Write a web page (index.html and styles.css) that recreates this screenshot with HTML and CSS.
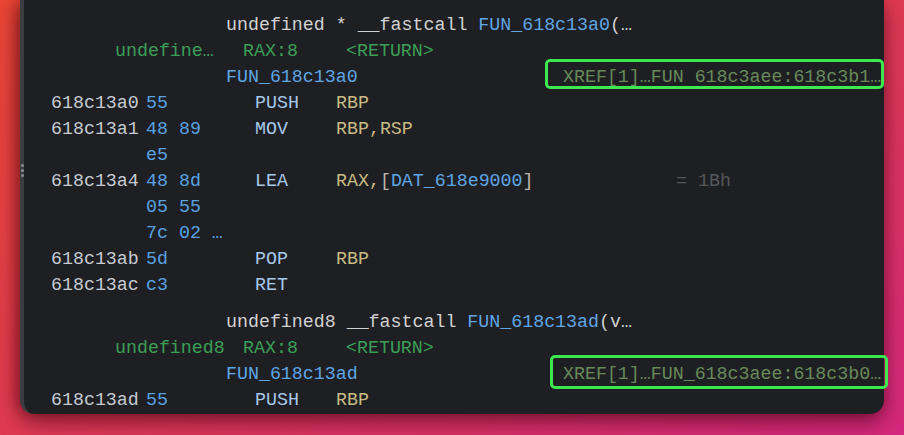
FILE: index.html
```html
<!DOCTYPE html>
<html>
<head>
<meta charset="utf-8">
<link rel="stylesheet" href="styles.css">
</head>
<body>
<div class="panel">
  <div class="fn">
    <div class="row head"><span class="txt">undefined * __fastcall </span><span class="blue">FUN_618c13a0</span><span class="txt">(…</span></div>
    <div class="row sig"><span class="g1">undefine…</span><span class="g2">RAX:8</span><span class="g3">&lt;RETURN&gt;</span></div>
    <div class="row lbl"><span class="label">FUN_618c13a0</span><span class="xref">XREF[1]…FUN 618c3aee:618c3b1…</span></div>
    <div class="row ins"><span class="addr">618c13a0</span><span class="bytes">55</span><span class="mn">PUSH</span><span class="op">RBP</span></div>
    <div class="row ins"><span class="addr">618c13a1</span><span class="bytes">48 89</span><span class="mn">MOV</span><span class="op">RBP,RSP</span></div>
    <div class="row ins"><span class="addr"></span><span class="bytes">e5</span></div>
    <div class="row ins"><span class="addr">618c13a4</span><span class="bytes">48 8d</span><span class="mn">LEA</span><span class="op opw">RAX,<span class="br">[</span><span class="blue">DAT_618e9000</span><span class="br">]</span></span><span class="cmt">= 1Bh</span></div>
    <div class="row ins"><span class="addr"></span><span class="bytes">05 55</span></div>
    <div class="row ins"><span class="addr"></span><span class="bytes">7c 02 …</span></div>
    <div class="row ins"><span class="addr">618c13ab</span><span class="bytes">5d</span><span class="mn">POP</span><span class="op">RBP</span></div>
    <div class="row ins"><span class="addr">618c13ac</span><span class="bytes">c3</span><span class="mn">RET</span></div>
  </div>
  <div class="fn second">
    <div class="row head"><span class="txt">undefined8 __fastcall </span><span class="blue">FUN_618c13ad</span><span class="txt">(v…</span></div>
    <div class="row sig"><span class="g1">undefined8</span><span class="g2">RAX:8</span><span class="g3">&lt;RETURN&gt;</span></div>
    <div class="row lbl"><span class="label">FUN_618c13ad</span><span class="xref">XREF[1]…FUN_618c3aee:618c3b0…</span></div>
    <div class="row ins"><span class="addr">618c13ad</span><span class="bytes">55</span><span class="mn">PUSH</span><span class="op">RBP</span></div>
  </div>
  <div class="hl hl1"></div>
  <div class="hl hl2"></div>
  <div class="grip"><i></i><i></i><i></i></div>
</div>
</body>
</html>
```

FILE: styles.css
```css
html, body {
  margin: 0;
  padding: 0;
  height: 100%;
  overflow: hidden;
}
body {
  background: linear-gradient(to bottom right, #ea4636 0%, #e03a52 50%, #d5287e 100%);
  font-family: "Liberation Mono", "Courier New", monospace;
  font-size: 18.3px;
}
.panel {
  position: relative;
  margin-left: 20px;
  width: 864px;
  height: 414px;
  box-sizing: border-box;
  background: #1e1f22;
  border-left: 4px solid #3b3d41;
  border-radius: 0 0 14px 14px;
  box-shadow: 0 8px 22px rgba(60, 0, 20, 0.55), -4px 0 14px rgba(80, 0, 0, 0.35);
  padding-top: 12px;
}
.fn.second {
  margin-top: 11px;
}
.row {
  display: flex;
  height: 26px;
  line-height: 26px;
}
.row span {
  white-space: pre;
}
.head { padding-left: 202px; }
.txt { color: #d2d2d2; }
.blue { color: #5fa6e4; }
.sig { padding-left: 91px; color: #3b9f58; }
.g1 { width: 128px; }
.g2 { width: 103px; }
.lbl { padding-left: 202px; }
.label { width: 337px; color: #5fa6e4; }
.xref { color: #678a5b; }
.ins { padding-left: 27px; }
.addr { width: 95px; color: #c6ccd3; }
.bytes { width: 109px; color: #58a2e2; }
.mn { width: 81px; color: #a6caec; }
.op { color: #c8bc84; }
.opw { width: 340px; }
.br { color: #bcb4a6; }
.cmt { color: #56575a; }
.hl {
  position: absolute;
  border: 3px solid #3ee650;
  border-radius: 5px;
  box-sizing: border-box;
}
.hl1 {
  left: 521px;
  top: 59px;
  width: 339px;
  height: 30px;
}
.hl2 {
  left: 526px;
  top: 355px;
  width: 338px;
  height: 34px;
}
.grip {
  position: absolute;
  left: -4px;
  top: 164px;
  width: 4px;
  display: flex;
  flex-direction: column;
  align-items: center;
  gap: 2px;
}
.grip i {
  width: 3px;
  height: 3px;
  border-radius: 50%;
  background: #8a8c90;
}
```
